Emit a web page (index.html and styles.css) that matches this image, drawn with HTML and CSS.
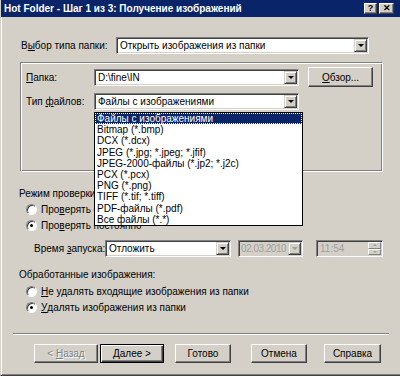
FILE: index.html
```html
<!DOCTYPE html>
<html>
<head>
    <meta charset="utf-8">
    <link rel="stylesheet" href="styles.css">
    <title>Hot Folder</title>
</head>
<body>
    <div class="window">
        <div class="titlebar">
            <span class="title">Hot Folder - Шаг 1 из 3: Получение изображений</span>
            <div class="caption-buttons">
                <span class="cap-btn">?</span>
                <span class="cap-btn cap-close">✕</span>
            </div>
        </div>

        <div class="content">
            <div class="row top-row">
                <label class="lbl-type">В<u>ы</u>бор типа папки:</label>
                <div class="combo combo-wide">
                    <span class="combo-text">Открыть изображения из папки</span>
                    <span class="drop-btn"><i></i></span>
                </div>
            </div>

            <div class="groupbox">
                <div class="group-rows">
                    <div class="row">
                        <label class="lbl-group"><u>П</u>апка:</label>
                        <div class="combo combo-mid">
                            <span class="combo-text">D:\fine\IN</span>
                            <span class="drop-btn"><i></i></span>
                        </div>
                    </div>
                    <div class="row">
                        <label class="lbl-group">Тип <u>ф</u>айлов:</label>
                        <div class="combo combo-mid">
                            <span class="combo-text">Файлы с изображениями</span>
                            <span class="drop-btn"><i></i></span>
                        </div>
                    </div>
                </div>
                <button class="btn btn-browse"><u>О</u>бзор...</button>
            </div>

            <div class="section section-check">
                <div class="section-title">Режим проверки папки:</div>
                <div class="radio-row"><span class="radio"></span>Про<u>в</u>ерять один раз</div>
                <div class="radio-row"><span class="radio checked"></span>Про<u>в</u>ерять постоянно</div>
                <div class="row time-row">
                    <label class="lbl-time">Время <u>з</u>апуска:</label>
                    <div class="combo combo-time">
                        <span class="combo-text">Отложить</span>
                        <span class="drop-btn"><i></i></span>
                    </div>
                    <div class="combo combo-date disabled">
                        <span class="combo-text">02.03.2010</span>
                        <span class="drop-btn"><i></i></span>
                    </div>
                    <div class="combo combo-clock disabled">
                        <span class="combo-text">11:54</span>
                        <span class="spin">
                            <span class="spin-up"></span>
                            <span class="spin-down"></span>
                        </span>
                    </div>
                </div>
            </div>

            <div class="section section-done">
                <div class="section-title">Обработанные изображения:</div>
                <div class="radio-row"><span class="radio"></span><u>Н</u>е удалять входящие изображения из папки</div>
                <div class="radio-row"><span class="radio checked"></span><u>У</u>далять изображения из папки</div>
            </div>

            <div class="separator"></div>

            <div class="buttons">
                <button class="btn btn-back">&lt; <u>Н</u>азад</button>
                <button class="btn btn-next"><u>Д</u>алее &gt;</button>
                <button class="btn btn-finish">Готово</button>
                <button class="btn btn-cancel">Отмена</button>
                <button class="btn btn-help">Справка</button>
            </div>
        </div>

        <ul class="dropdown">
            <li class="selected">Файлы с изображениями</li>
            <li>Bitmap (*.bmp)</li>
            <li>DCX (*.dcx)</li>
            <li>JPEG (*.jpg; *.jpeg; *.jfif)</li>
            <li>JPEG-2000-файлы (*.jp2; *.j2c)</li>
            <li>PCX (*.pcx)</li>
            <li>PNG (*.png)</li>
            <li>TIFF (*.tif; *.tiff)</li>
            <li>PDF-файлы (*.pdf)</li>
            <li>Все файлы (*.*)</li>
        </ul>
    </div>
</body>
</html>
```

FILE: styles.css
```css
body {
    margin: 0;
    background-color: #d4d0c8;
    font-family: "Liberation Sans", Arial, sans-serif;
    font-size: 10px;
    color: #000;
}
u {
    text-decoration: underline;
}
.window {
    position: relative;
    width: 400px;
    height: 376px;
    box-sizing: border-box;
    background-color: #d4d0c8;
    border-left: 1px solid #d4d0c8;
    border-bottom: 1px solid #404040;
    box-shadow: inset 1px 0 0 #fff, inset 0 -1px 0 #808080;
    overflow: hidden;
}
.titlebar {
    height: 17px;
    margin-left: -1px;
    background-color: #0a246a;
    color: #fff;
    display: flex;
    align-items: center;
    justify-content: space-between;
    padding: 0 6px 0 4px;
}
.title {
    font-weight: bold;
    font-size: 10px;
}
.caption-buttons {
    display: flex;
    gap: 2px;
}
.cap-btn {
    width: 11px;
    height: 9px;
    background-color: #d4d0c8;
    color: #000;
    font-size: 9px;
    font-weight: bold;
    line-height: 9px;
    text-align: center;
    border: 1px solid;
    border-color: #fff #404040 #404040 #fff;
    box-shadow: inset -1px -1px 0 #808080;
}
.cap-close {
    width: 13px;
}
.content {
    padding: 20px 11px 0 18px;
}
.row {
    display: flex;
    align-items: center;
}
.top-row {
    height: 17px;
}
.lbl-type {
    width: 95px;
    padding-left: 2px;
}
.combo {
    position: relative;
    height: 17px;
    box-sizing: border-box;
    background-color: #fff;
    border: 1px solid;
    border-color: #808080 #fff #fff #808080;
    box-shadow: inset 1px 1px 0 #404040, inset -1px -1px 0 #d4d0c8;
    display: flex;
    align-items: center;
}
.combo-text {
    flex: 1;
    padding-left: 3px;
    white-space: nowrap;
    overflow: hidden;
}
.drop-btn {
    width: 13px;
    height: 13px;
    margin-right: 1px;
    box-sizing: border-box;
    background-color: #d4d0c8;
    border: 1px solid;
    border-color: #d4d0c8 #404040 #404040 #d4d0c8;
    box-shadow: inset 1px 1px 0 #fff, inset -1px -1px 0 #808080;
    display: flex;
    align-items: center;
    justify-content: center;
}
.drop-btn i {
    width: 0;
    height: 0;
    border-left: 3px solid transparent;
    border-right: 3px solid transparent;
    border-top: 3px solid #000;
}
.combo-wide {
    width: 253px;
}
.groupbox {
    margin: 8px 0 0 1px;
    width: 363px;
    height: 110px;
    box-sizing: border-box;
    border: 1px solid;
    border-color: #808080 #fff #fff #808080;
    box-shadow: inset 1px 1px 0 #fff, inset -1px -1px 0 #808080;
    display: flex;
    align-items: flex-start;
    padding: 4px 0 0 5px;
}
.group-rows {
    margin-top: 2px;
    display: flex;
    flex-direction: column;
    gap: 7px;
}
.lbl-group {
    width: 68px;
}
.combo-mid {
    width: 205px;
}
.btn {
    font-family: inherit;
    font-size: 10px;
    color: #000;
    height: 20px;
    padding: 0;
    box-sizing: border-box;
    background-color: #d4d0c8;
    border: 1px solid;
    border-color: #fff #404040 #404040 #fff;
    box-shadow: inset -1px -1px 0 #808080;
}
.btn-browse {
    width: 65px;
    margin-left: 9px;
}
.section-check {
    margin-top: 15px;
}
.section-title {
    height: 14px;
    line-height: 14px;
}
.radio-row {
    height: 16px;
    display: flex;
    align-items: center;
    padding-left: 7px;
}
.radio {
    width: 11px;
    height: 11px;
    box-sizing: border-box;
    border-radius: 50%;
    background-color: #fff;
    border: 1px solid;
    border-color: #808080 #fff #fff #808080;
    box-shadow: inset 1px 1px 0 #404040;
    margin-right: 4px;
    position: relative;
}
.radio.checked::after {
    content: "";
    position: absolute;
    left: 3px;
    top: 3px;
    width: 3px;
    height: 3px;
    border-radius: 50%;
    background-color: #000;
}
.time-row {
    margin-top: 7px;
    height: 17px;
}
.lbl-time {
    width: 71px;
    padding-left: 15px;
    white-space: nowrap;
}
.combo-time {
    width: 126px;
}
.combo-date {
    width: 65px;
    margin-left: 7px;
}
.combo-date .combo-text {
    padding-left: 2px;
    letter-spacing: -0.5px;
}
.combo-clock {
    width: 67px;
    margin-left: 13px;
}
.disabled {
    background-color: #d4d0c8;
    color: #a0a0a0;
}
.disabled .drop-btn i {
    border-top-color: #a0a0a0;
}
.spin {
    width: 13px;
    height: 13px;
    margin-right: 1px;
    display: flex;
    flex-direction: column;
}
.spin span {
    flex: 1;
    background-color: #d4d0c8;
    border: 1px solid;
    border-color: #fff #808080 #808080 #fff;
    display: flex;
    align-items: center;
    justify-content: center;
}
.spin-up::after {
    content: "";
    border-left: 2px solid transparent;
    border-right: 2px solid transparent;
    border-bottom: 2px solid #a0a0a0;
}
.spin-down::after {
    content: "";
    border-left: 2px solid transparent;
    border-right: 2px solid transparent;
    border-top: 2px solid #a0a0a0;
}
.section-done {
    margin-top: 11px;
}
.section-done .section-title {
    margin-bottom: 1px;
}
.separator {
    margin: 18px 0 0 -6px;
    width: 376px;
    border-top: 1px solid #808080;
    border-bottom: 1px solid #fff;
}
.buttons {
    display: flex;
    margin-top: 9px;
    padding-left: 15px;
}
.buttons .btn {
    height: 19px;
}
.btn-back {
    width: 64px;
    color: #808080;
    text-shadow: 1px 1px 0 #fff;
}
.btn-next {
    width: 64px;
    margin-left: 2px;
    border-color: #000;
    box-shadow: inset 1px 1px 0 #fff, inset -1px -1px 0 #404040, inset -2px -2px 0 #808080;
}
.btn-finish {
    width: 56px;
    margin-left: 11px;
}
.btn-cancel {
    width: 56px;
    margin-left: 20px;
}
.btn-help {
    width: 57px;
    margin-left: 17px;
}
.dropdown {
    position: absolute;
    left: 93px;
    top: 112px;
    width: 209px;
    box-sizing: border-box;
    margin: 0;
    padding: 0;
    list-style: none;
    background-color: #fff;
    border: 1px solid #000;
}
.dropdown li {
    height: 11.2px;
    line-height: 11px;
    padding-left: 2px;
    white-space: nowrap;
}
.dropdown li.selected {
    background-color: #0a246a;
    color: #fff;
    outline: 1px dotted #fff;
    outline-offset: -1px;
}
```
